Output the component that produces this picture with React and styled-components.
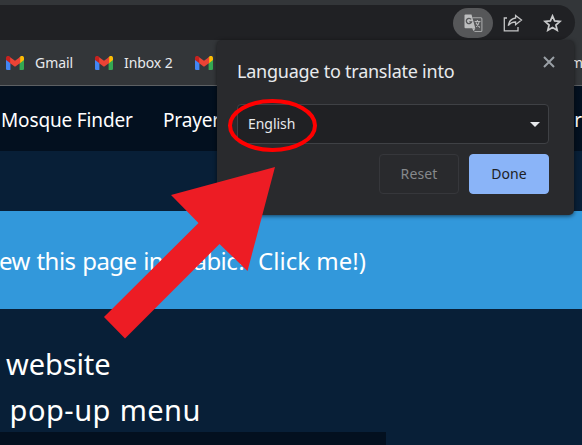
import React from "react";
import styled, { createGlobalStyle } from "styled-components";

const GlobalStyle = createGlobalStyle`
  * { box-sizing: border-box; }
  body { margin: 0; background: #081f37; overflow: hidden; }
  svg { flex: none; }
`;

const Screen = styled.div`
  position: relative;
  display: flex;
  flex-direction: column;
  width: 582px;
  height: 445px;
  overflow: hidden;
  background: #081f37;
  color: #fff;
  font-family: "Noto Sans", "Open Sans", sans-serif;
`;

const Label = styled.span`
  display: block;
  flex: none;
  white-space: pre;
  font-size: ${(p) => p.$size}px;
  line-height: ${(p) => p.$line || 24}px;
  letter-spacing: ${(p) => p.$track || 0}px;
  word-spacing: ${(p) => p.$words || 0}px;
  color: ${(p) => p.$color || "inherit"};
`;

const Toolbar = styled.header`
  flex: none;
  height: 40px;
  padding: 5px 7px 0 0;
  background: #333639;
`;

const AddressBar = styled.div`
  display: flex;
  align-items: center;
  justify-content: flex-end;
  height: 35px;
  padding: 0 13px 0 0;
  border-radius: 0 18px 18px 0;
  background: #202124;
`;

const TranslateButton = styled.button`
  display: grid;
  place-items: center;
  width: 40px;
  height: 30px;
  margin: 1px 10px 0 0;
  padding: 0;
  border: 0;
  border-radius: 15px;
  background: #565759;
`;

const ShareSlot = styled.span`
  display: flex;
  margin-right: 20px;
`;

const Bookmarks = styled.nav`
  display: flex;
  flex: none;
  align-items: center;
  height: 46px;
  padding: 0 0 0 6px;
  border-bottom: 1px solid #5d6063;
  background: #333639;
  color: #e8eaed;
`;

const Bookmark = styled.a`
  display: flex;
  align-items: center;
  gap: 11px;
  width: ${(p) => p.$width}px;
`;

const OverflowBookmark = styled.a`
  margin: 1px -1px 0 auto;
`;

const SiteNav = styled.nav`
  display: flex;
  flex: none;
  align-items: center;
  height: 65px;
  padding: 3px 0 0 1px;
  background: #03101f;
`;

const NavItem = styled.a`
  width: ${(p) => p.$width}px;
`;

const LastNavItem = styled.a`
  margin-left: auto;
`;

const Hero = styled.main`
  display: flex;
  flex: 1;
  flex-direction: column;
  padding-top: 60px;
`;

const Banner = styled.section`
  display: flex;
  align-items: center;
  flex: none;
  height: 98px;
  padding-top: 2px;
  background: #3298db;
`;

const BannerText = styled.div`
  display: flex;
  gap: 11px;
  margin-left: -1px;
`;

const Copy = styled.section`
  display: flex;
  flex-direction: column;
  flex: none;
  height: 123px;
  padding-top: 32px;
`;

const CopyLine = styled.div`
  margin-left: ${(p) => p.$indent}px;
  height: 46px;
`;

const StatusStrip = styled.footer`
  flex: none;
  width: 386px;
  height: 13px;
  background: #03101f;
`;

const Popup = styled.section`
  position: absolute;
  top: 40px;
  left: 217px;
  width: 357px;
  height: 175px;
  padding: 12px 25px 20px 20px;
  border-radius: 5px;
  background: #292a2d;
  box-shadow: 0 1px 4px rgba(0, 0, 0, 0.6);
`;

const PopupHeader = styled.div`
  display: flex;
  justify-content: space-between;
  height: 52px;
  padding-top: 7px;
`;

const CloseButton = styled.button`
  display: flex;
  width: 12px;
  height: 12px;
  margin: -3px -6px 0 0;
  padding: 0;
  border: 0;
  background: none;
`;

const LanguageSelect = styled.div`
  display: flex;
  align-items: center;
  justify-content: space-between;
  height: 40px;
  padding: 0 8px 0 10px;
  border: 1px solid #3f4145;
  border-radius: 4px;
  background: #202124;
  color: #e8eaed;
`;

const Caret = styled.span`
  border: 5px solid transparent;
  border-top-color: #e8eaed;
  border-bottom: 0;
`;

const Actions = styled.div`
  display: flex;
  justify-content: flex-end;
  gap: 10px;
  padding-top: 10px;
`;

const ActionButton = styled.button`
  display: grid;
  place-items: center;
  width: 80px;
  height: 40px;
  padding: 0;
  border: 1px solid ${(p) => (p.$primary ? "#8ab4f8" : "#36373b")};
  border-radius: 4px;
  background: ${(p) => (p.$primary ? "#8ab4f8" : "transparent")};
  color: ${(p) => (p.$primary ? "#202124" : "#85888b")};
  font-family: inherit;
  font-weight: 450;
`;

const Annotation = styled.svg`
  position: absolute;
  inset: 0;
`;

const GmailIcon = () => (
  <svg width="18" height="14" viewBox="0 0 18 14">
    <path d="M0 2.5V12.7Q0 14 1.3 14H4.4V5.5Z" fill="#4285f4" />
    <path d="M13.6 5.5V14h3.1Q18 14 18 12.7V2.5Z" fill="#34a853" />
    <path d="M13.6 1.3V7.4L18 4V2.1C18 .1 15.8-.8 14.4.4Z" fill="#fbbc04" />
    <path d="M3.8 7V1L9 4.8 14.2 1V7L9 10.8Z" fill="#ea4335" />
    <path d="M0 2.1V4l4.2 3.1V1L3.6.4C2.2-.8 0 .1 0 2.1Z" fill="#c5221f" />
  </svg>
);

const TranslateIcon = () => (
  <svg width="19" height="19" viewBox="0 0 19 19" fill="none">
    <path d="M8.5 3.7h8.4q1 0 1 1v11.8q0 1-1 1h-6.5" stroke="#a5a6a7" strokeWidth="1.1" />
    <path d="M1.5.5h6l3.8 13.8H1.5q-1 0-1-1V1.5q0-1 1-1Z" fill="#bdbebf" />
    <path d="M8 14.3h3.3l-1.5 3Z" fill="#bdbebf" />
    <path d="M7.2 5.4A2.7 2.7 0 1 0 7.6 7.8H5.3" stroke="#565759" strokeWidth="1.3" />
    <path d="M10.7 7.5h5.8M13.4 6.1v1.4m1.8 0c-.4 2.4-1.5 4-3 5.2m-.2-4.2c.8 2 2.2 3.6 3.9 5" stroke="#b5b6b7" strokeWidth="1.1" />
  </svg>
);

const ShareIcon = () => (
  <svg width="20" height="18" viewBox="0 0 20 18" fill="none" stroke="#c4c5c6" strokeWidth="1.3">
    <path d="M4 4H1.3v12.8H15V13" />
    <path d="M12.6 1.4 18.5 6l-5.9 4.7V8C9.4 8 7 9 5.2 11.7 5.9 7.5 8.5 4.5 12.6 4Z" strokeLinejoin="miter" />
  </svg>
);

const StarIcon = () => (
  <svg width="19" height="18" viewBox="0 0 19 18" fill="none">
    <path d="m9.5 1.9 2.1 5 5.4.5-4.1 3.6 1.3 5.3-4.7-2.8-4.7 2.8 1.3-5.3L2 7.4l5.4-.5Z" stroke="#c9cacb" strokeWidth="1.7" />
  </svg>
);

const CloseIcon = () => (
  <svg width="12" height="12" viewBox="0 0 12 12">
    <path d="m1 1 10 10M11 1 1 11" stroke="#9aa0a6" strokeWidth="2" />
  </svg>
);

export default function App() {
  return (
    <Screen>
      <GlobalStyle />
      <Toolbar>
        <AddressBar>
          <TranslateButton aria-label="Translate this page"><TranslateIcon /></TranslateButton>
          <ShareSlot><ShareIcon /></ShareSlot>
          <StarIcon />
        </AddressBar>
      </Toolbar>
      <Bookmarks>
        <Bookmark $width={89}>
          <GmailIcon />
          <Label $size={14} $track={-0.05}>Gmail</Label>
        </Bookmark>
        <Bookmark $width={100}>
          <GmailIcon />
          <Label $size={14} $track={-0.1}>Inbox 2</Label>
        </Bookmark>
        <Bookmark $width={18}><GmailIcon /></Bookmark>
        <OverflowBookmark><Label $size={14}>m</Label></OverflowBookmark>
      </Bookmarks>
      <SiteNav>
        <NavItem $width={162}><Label $size={19} $track={-0.15}>Mosque Finder</Label></NavItem>
        <NavItem $width={60}><Label $size={19} $track={-0.15}>Prayer</Label></NavItem>
        <LastNavItem><Label $size={19}>r</Label></LastNavItem>
      </SiteNav>
      <Hero>
        <Banner>
          <BannerText>
            <Label $size={24} $line={34} $track={-0.55} $words={1}>ew this page in Arabic?</Label>
            <Label $size={24} $line={34}>Click me!)</Label>
          </BannerText>
        </Banner>
        <Copy>
          <CopyLine $indent={6}><Label $size={29} $line={46} $track={-0.1}>website</Label></CopyLine>
          <CopyLine $indent={-16}><Label $size={29} $line={46} $track={0.5} $words={0.7}>e pop-up menu</Label></CopyLine>
        </Copy>
        <StatusStrip />
      </Hero>
      <Popup>
        <PopupHeader>
          <Label $size={18} $track={-0.24} $color="#e8eaed">Language to translate into</Label>
          <CloseButton aria-label="Close"><CloseIcon /></CloseButton>
        </PopupHeader>
        <LanguageSelect>
          <Label $size={14} $track={-0.05}>English</Label>
          <Caret />
        </LanguageSelect>
        <Actions>
          <ActionButton><Label $size={14} $track={0.1}>Reset</Label></ActionButton>
          <ActionButton $primary><Label $size={14} $track={0.1}>Done</Label></ActionButton>
        </Actions>
      </Popup>
      <Annotation width="582" height="445" viewBox="0 0 582 445">
        <ellipse cx="272.5" cy="125.5" rx="42.5" ry="24.5" fill="none" stroke="#f00" strokeWidth="4" />
        <path d="M275 167 247.5 271 219.5 244 125 338.5 104 317 198.5 223 171 195Z" fill="#ed1c24" />
      </Annotation>
    </Screen>
  );
}
